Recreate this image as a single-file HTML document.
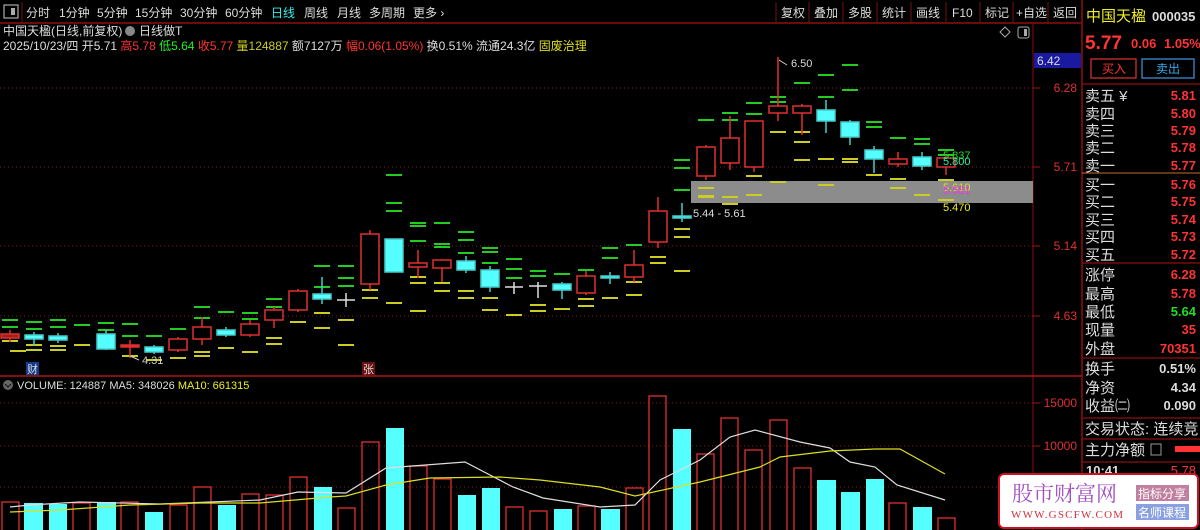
<!DOCTYPE html>
<html><head><meta charset="utf-8"><style>
html,body{margin:0;padding:0;background:#000;width:1200px;height:530px;overflow:hidden;font-family:"Liberation Sans","Noto Sans CJK SC",sans-serif}
svg{position:absolute;left:0;top:0}
</style></head><body>
<svg width="1200" height="530" viewBox="0 0 1200 530" xmlns="http://www.w3.org/2000/svg" font-family="Liberation Sans, Noto Sans CJK SC, sans-serif">
<rect width="1200" height="530" fill="#000"/>
<line x1="0" y1="23" x2="1082" y2="23" stroke="#8a1010" stroke-width="1.5"/>
<rect x="4" y="5" width="14" height="13" fill="none" stroke="#aaa" stroke-width="1.2"/>
<rect x="11" y="8" width="4" height="7" fill="#aaa"/>
<line x1="22" y1="2" x2="22" y2="22" stroke="#7a1010"/>
<g font-size="12" fill="#ddd">
<text x="26" y="17">分时</text><text x="59" y="17">1分钟</text><text x="97" y="17">5分钟</text><text x="135" y="17">15分钟</text><text x="180" y="17">30分钟</text><text x="225" y="17">60分钟</text><text x="271" y="17" fill="#3ee">日线</text><text x="304" y="17">周线</text><text x="337" y="17">月线</text><text x="369" y="17">多周期</text><text x="413" y="17">更多 ›</text>
<text x="781" y="17">复权</text><text x="814" y="17">叠加</text><text x="848" y="17">多股</text><text x="882" y="17">统计</text><text x="916" y="17">画线</text><text x="952" y="17">F10</text><text x="985" y="17">标记</text><text x="1016" y="17">+自选</text><text x="1053" y="17">返回</text>
</g>
<g stroke="#7a1010"><line x1="776" y1="2" x2="776" y2="22"/><line x1="809" y1="2" x2="809" y2="22"/><line x1="843" y1="2" x2="843" y2="22"/><line x1="877" y1="2" x2="877" y2="22"/><line x1="911" y1="2" x2="911" y2="22"/><line x1="946" y1="2" x2="946" y2="22"/><line x1="980" y1="2" x2="980" y2="22"/><line x1="1013" y1="2" x2="1013" y2="22"/><line x1="1048" y1="2" x2="1048" y2="22"/></g>
<g font-size="12" fill="#ddd">
<text x="3" y="35">中国天楹(日线,前复权)</text>
<circle cx="130" cy="31" r="5" fill="#888"/><text x="139" y="35">日线做T</text>
<text x="3" y="50">2025/10/23/四 开5.71 <tspan fill="#f33">高5.78</tspan> <tspan fill="#2e2">低5.64</tspan> <tspan fill="#f33">收5.77</tspan> <tspan fill="#cc2">量124887</tspan> 额7127万 <tspan fill="#f33">幅0.06(1.05%)</tspan> 换0.51% 流通24.3亿 <tspan fill="#dd2">固废治理</tspan></text>
</g>
<path d="M1005 27 l5 5 -5 5 -5 -5z" fill="none" stroke="#aaa"/>
<rect x="1018" y="27" width="11" height="11" rx="2" fill="none" stroke="#aaa"/><rect x="1024" y="29" width="3" height="7" fill="#aaa"/>
<g stroke="#8a1515" stroke-dasharray="1,3">
<line x1="0" y1="88" x2="1033" y2="88"/><line x1="0" y1="167" x2="1033" y2="167"/><line x1="0" y1="246" x2="1033" y2="246"/><line x1="0" y1="316" x2="1033" y2="316"/>
<line x1="0" y1="403" x2="1033" y2="403"/><line x1="0" y1="446" x2="1033" y2="446"/><line x1="0" y1="487" x2="1033" y2="487"/>
</g>
<line x1="1033" y1="24" x2="1033" y2="530" stroke="#8a1010"/>
<line x1="1082" y1="0" x2="1082" y2="530" stroke="#8a1010" stroke-width="1.5"/>
<line x1="0" y1="376" x2="1082" y2="376" stroke="#b01515" stroke-width="1.5"/>
<g stroke="#a01515"><line x1="1033" y1="88" x2="1040" y2="88"/><line x1="1033" y1="167" x2="1040" y2="167"/><line x1="1033" y1="246" x2="1040" y2="246"/><line x1="1033" y1="316" x2="1040" y2="316"/><line x1="1033" y1="403" x2="1040" y2="403"/><line x1="1033" y1="446" x2="1040" y2="446"/></g>
<g font-size="12" fill="#e03030" text-anchor="end"><text x="1077" y="92">6.28</text><text x="1077" y="171">5.71</text><text x="1077" y="250">5.14</text><text x="1077" y="320">4.63</text><text x="1077" y="407">15000</text><text x="1077" y="450">10000</text></g>
<rect x="1034" y="53" width="47" height="15" fill="#1a1aa0"/><text x="1037" y="65" font-size="12" fill="#ddd">6.42</text>
<rect x="691" y="181" width="342" height="22" fill="#8c8c8c"/>
<g stroke-width="2">
<g stroke="#2c2"><path d="M2 320h16M2 327h16M26 322h16M26 329h16M50 320h16M50 327h16M74 325h16M98 323h16M98 330h16M122 324h16M122 336h16M146 336h16M170 329h16M194 307h16M194 318h16M218 312h16M242 313h16M242 319h16M266 299h16M266 307h16M290 296h16M314 266h16M314 287h16M338 266h16M338 278h16M338 286h16M362 255h16M362 268h16M386 175h16M386 203h16M386 211h16M410 223h16M410 226h16M410 241h16M434 223h16M434 244h16M434 247h16M458 232h16M458 240h16M458 253h16M482 248h16M482 252h16M482 263h16M506 259h16M506 269h16M506 278h16M530 271h16M530 276h16M554 274h16M578 270h16M602 248h16M602 258h16M626 245h16M650 212h16M674 190h16M674 168h16M674 160h16M698 160h16M698 120h16M722 120h16M722 113h16M746 103h16M746 114h16M770 97h16M794 83h16M818 75h16M842 65h16M842 90h16M866 122h16M866 127h16M890 138h16M914 139h16M914 144h16M938 150h16M938 155h16M818 97h16M770 102h16"/></g>
<g stroke="#cc2"><path d="M2 341h16M10 351h16M26 345h16M26 350h16M50 346h16M50 350h16M74 345h16M98 345h16M122 356h16M146 360h16M170 358h16M194 352h16M194 356h16M218 348h16M242 352h16M266 338h16M266 344h16M290 322h16M314 313h16M314 328h16M338 320h16M338 345h16M362 290h16M362 298h16M386 303h16M410 277h16M410 283h16M410 311h16M434 283h16M434 291h16M458 291h16M458 298h16M482 298h16M482 310h16M506 315h16M530 305h16M530 311h16M554 309h16M578 299h16M578 306h16M602 298h16M626 282h16M626 295h16M650 257h16M650 263h16M674 229h16M674 237h16M674 271h16M698 188h16M698 196h16M722 197h16M746 176h16M746 195h16M770 182h16M794 132h16M794 160h16M818 159h16M842 159h16M866 175h16M890 179h16M890 188h16M914 195h16M938 180h16M938 200h16M698 197h16M722 204h16M770 132h16M794 142h16M818 185h16M842 162h16"/></g>
</g>
<g stroke-width="1.5">
<g stroke="#e03030" fill="none">
<path d="M10 330V342M130 340V358M178 337V352M202 317V345M250 320V337M274 307V328M298 289V312M370 230V290M418 250V278M442 260V282M586 271V295M634 250V282M658 197V248M706 145V180M730 116V170M754 121V172M778 57V121M802 104V135M898 152V167M946 155V175"/>
<rect x="1" y="334" width="18" height="4" fill="#a02020"/>
<rect x="121" y="345" width="18" height="2" fill="#e03030"/>
<rect x="169" y="339" width="18" height="11" fill="#000"/>
<rect x="193" y="327" width="18" height="12" fill="#000"/>
<rect x="241" y="324" width="18" height="11" fill="#000"/>
<rect x="265" y="310" width="18" height="10" fill="#000"/>
<rect x="289" y="291" width="18" height="19" fill="#000"/>
<rect x="361" y="234" width="18" height="50" fill="#000"/>
<rect x="409" y="263" width="18" height="4" fill="#000"/>
<rect x="433" y="260" width="18" height="8" fill="#000"/>
<rect x="577" y="276" width="18" height="17" fill="#000"/>
<rect x="625" y="265" width="18" height="12" fill="#000"/>
<rect x="649" y="211" width="18" height="31" fill="#000"/>
<rect x="697" y="147" width="18" height="29" fill="#000"/>
<rect x="721" y="138" width="18" height="25" fill="#000"/>
<rect x="745" y="121" width="18" height="46" fill="#000"/>
<rect x="769" y="106" width="18" height="7" fill="#000"/>
<rect x="793" y="106" width="18" height="7" fill="#000"/>
<rect x="889" y="159" width="18" height="5" fill="#000"/>
<rect x="937" y="158" width="18" height="9" fill="#000"/>
</g>
<g stroke="#4cc" fill="#5ff">
<path d="M34 332V346M58 333V343M106 330V350M154 345V354M226 327V337M322 277V304M394 239V272M466 256V273M490 266V292M562 282V299M610 272V284M682 203V222M826 100V133M850 120V145M874 146V173M922 152V170"/>
<rect x="25" y="335" width="18" height="4"/><rect x="49" y="336" width="18" height="4"/><rect x="97" y="334" width="18" height="15"/><rect x="145" y="347" width="18" height="5"/><rect x="217" y="330" width="18" height="5"/><rect x="313" y="294" width="18" height="5"/><rect x="385" y="239" width="18" height="33"/><rect x="457" y="261" width="18" height="9"/><rect x="481" y="270" width="18" height="17"/><rect x="553" y="284" width="18" height="6"/><rect x="601" y="276" width="18" height="2"/><rect x="673" y="216" width="18" height="2"/><rect x="817" y="110" width="18" height="11"/><rect x="841" y="122" width="18" height="15"/><rect x="865" y="150" width="18" height="9"/><rect x="913" y="157" width="18" height="9"/>
</g>
<g stroke="#ddd"><path d="M337 300h18M346 293V307M505 287h18M514 282V294M529 286h18M538 282V298"/></g>
</g>
<path d="M779 60 l8 5" stroke="#ccc"/><text x="791" y="67" font-size="11" fill="#ddd">6.50</text>
<path d="M130 356 l9 4" stroke="#ccc"/><text x="142" y="364" font-size="11" fill="#ccc">4.31</text>
<text x="693" y="217" font-size="11" fill="#ddd">5.44 - 5.61</text>
<text x="943" y="159" font-size="11" fill="#2d2">5.837</text><text x="943" y="165" font-size="11" fill="#3e9">5.800</text>
<text x="943" y="191" font-size="11" fill="#dd2">5.610</text><text x="943" y="194" font-size="11" fill="#e3e">5.581</text>
<text x="943" y="211" font-size="11" fill="#ee2">5.470</text>
<rect x="26" y="362" width="13" height="13" fill="#123a8a"/><text x="27" y="373" font-size="11" fill="#ddd">财</text>
<rect x="362" y="362" width="13" height="13" fill="#6a1010"/><text x="363" y="373" font-size="11" fill="#ddd">张</text>
<circle cx="8" cy="385" r="5" fill="#666"/><path d="M5 384l3 3 3-3" stroke="#111" fill="none"/>
<text x="17" y="389" font-size="11" fill="#ddd">VOLUME: 124887  MA5: 348026 <tspan fill="#ee2">MA10: 661315</tspan></text>
<g stroke="#e03030" stroke-width="1.3" fill="none">
<rect x="2" y="502" width="17" height="30"/><rect x="73" y="503" width="17" height="30"/><rect x="121" y="502" width="17" height="30"/><rect x="170" y="505" width="17" height="30"/><rect x="194" y="487" width="17" height="50"/><rect x="242" y="494" width="17" height="40"/><rect x="266" y="495" width="17" height="40"/><rect x="290" y="477" width="17" height="60"/><rect x="338" y="508" width="17" height="30"/><rect x="362" y="442" width="17" height="90"/><rect x="410" y="466" width="17" height="70"/><rect x="434" y="479" width="17" height="60"/><rect x="506" y="507" width="17" height="30"/><rect x="530" y="511" width="17" height="30"/><rect x="578" y="506" width="17" height="30"/><rect x="626" y="488" width="17" height="50"/><rect x="649" y="396" width="17" height="140"/><rect x="697" y="454" width="17" height="80"/><rect x="721" y="418" width="17" height="120"/><rect x="745" y="450" width="17" height="90"/><rect x="770" y="420" width="17" height="120"/><rect x="794" y="468" width="17" height="70"/><rect x="889" y="503" width="17" height="30"/><rect x="938" y="518" width="17" height="30"/>
</g>
<g fill="#5ff">
<rect x="24" y="503" width="19" height="27"/><rect x="49" y="504" width="18" height="26"/><rect x="97" y="502" width="19" height="28"/><rect x="145" y="512" width="18" height="18"/><rect x="218" y="505" width="18" height="25"/><rect x="314" y="487" width="18" height="43"/><rect x="386" y="428" width="18" height="102"/><rect x="458" y="495" width="18" height="35"/><rect x="482" y="488" width="18" height="42"/><rect x="554" y="509" width="18" height="21"/><rect x="601" y="509" width="19" height="21"/><rect x="673" y="429" width="18" height="101"/><rect x="817" y="480" width="19" height="50"/><rect x="841" y="492" width="19" height="38"/><rect x="866" y="479" width="18" height="51"/><rect x="913" y="507" width="19" height="23"/>
</g>
<polyline fill="none" stroke="#ddd" stroke-width="1.2" points="10,507 30,505 80,502 160,504 260,500 298,492 346,493 386,468 465,462 513,487 543,498 600,507 635,505 660,480 700,460 730,437 755,430 800,442 830,448 850,462 875,467 897,485 945,500"/>
<polyline fill="none" stroke="#dd2" stroke-width="1.2" points="10,512 60,510 130,505 200,503 260,503 330,497 346,496 386,485 430,478 500,477 540,480 600,487 635,496 700,482 760,467 780,457 830,451 875,449 900,449 945,474"/>
<text x="1086" y="21" font-size="15" fill="#ee2">中国天楹</text><text x="1152" y="21" font-size="13" font-weight="bold" fill="#ddd">000035</text>
<text x="1085" y="49" font-size="19" font-weight="bold" fill="#f33">5.77</text><text x="1131" y="48" font-size="13" font-weight="bold" fill="#f33">0.06</text><text x="1164" y="48" font-size="13" font-weight="bold" fill="#f33">1.05%</text>
<rect x="1091" y="59" width="45" height="19" fill="none" stroke="#d03030" stroke-width="1.3"/><text x="1102" y="73" font-size="12" fill="#f33">买入</text>
<rect x="1142" y="59" width="52" height="19" fill="none" stroke="#3a8ad0" stroke-width="1.3"/><text x="1156" y="73" font-size="12" fill="#3ae">卖出</text>
<g stroke="#8a1010" stroke-width="1.3"><line x1="1082" y1="84" x2="1200" y2="84"/><line x1="1082" y1="263" x2="1200" y2="263"/><line x1="1082" y1="358" x2="1200" y2="358"/><line x1="1082" y1="418" x2="1200" y2="418"/><line x1="1082" y1="439" x2="1200" y2="439"/><line x1="1082" y1="462" x2="1200" y2="462"/></g>
<line x1="1082" y1="173" x2="1200" y2="173" stroke="#c07030"/>
<g font-size="15" fill="#ddd">
<text x="1085" y="101">卖五 ¥</text><text x="1085" y="119">卖四</text><text x="1085" y="136">卖三</text><text x="1085" y="153">卖二</text><text x="1085" y="171">卖一</text>
<text x="1085" y="190">买一</text><text x="1085" y="207">买二</text><text x="1085" y="225">买三</text><text x="1085" y="242">买四</text><text x="1085" y="260">买五</text>
<text x="1085" y="280">涨停</text><text x="1085" y="299">最高</text><text x="1085" y="317">最低</text><text x="1085" y="335">现量</text><text x="1085" y="354">外盘</text>
<text x="1085" y="374">换手</text><text x="1085" y="393">净资</text><text x="1085" y="411">收益㈡</text>
<text x="1085" y="434">交易状态: 连续竞</text><text x="1085" y="455">主力净额</text>
</g>
<rect x="1151" y="444" width="10" height="11" fill="none" stroke="#999"/><rect x="1175" y="446" width="25" height="6" fill="#f33"/>
<g font-size="13" font-weight="bold" fill="#f33" text-anchor="end">
<text x="1196" y="100">5.81</text><text x="1196" y="118">5.80</text><text x="1196" y="135">5.79</text><text x="1196" y="152">5.78</text><text x="1196" y="170">5.77</text>
<text x="1196" y="189">5.76</text><text x="1196" y="206">5.75</text><text x="1196" y="224">5.74</text><text x="1196" y="241">5.73</text><text x="1196" y="259">5.72</text>
<text x="1196" y="279">6.28</text><text x="1196" y="298">5.78</text><text x="1196" y="316" fill="#2d2">5.64</text><text x="1196" y="334">35</text><text x="1196" y="353">70351</text>
<text x="1196" y="373" fill="#ddd">0.51%</text><text x="1196" y="392" fill="#ddd">4.34</text><text x="1196" y="410" fill="#ddd">0.090</text>
</g>
<text x="1086" y="475" font-size="13" font-weight="bold" fill="#ddd">10:41</text><text x="1196" y="475" font-size="13" text-anchor="end" fill="#f33">5.78</text>
<rect x="999" y="474" width="199" height="54" rx="5" fill="#fff" stroke="#d01020" stroke-width="2"/>
<text x="1012" y="501" font-size="21" fill="#a050c0" font-family="Liberation Serif, Noto Serif CJK SC, serif">股市财富网</text>
<text x="1011" y="518" font-size="11" fill="#d03040" font-family="Liberation Serif, serif" letter-spacing="1.2">WWW.GSCFW.COM</text>
<rect x="1136" y="485" width="53" height="16" fill="#c080a0"/><text x="1138" y="498" font-size="12" fill="#fff">指标分享</text>
<rect x="1136" y="504" width="53" height="16" fill="#8aa0e0"/><text x="1138" y="517" font-size="12" fill="#fff">名师课程</text>
</svg>
</body></html>
